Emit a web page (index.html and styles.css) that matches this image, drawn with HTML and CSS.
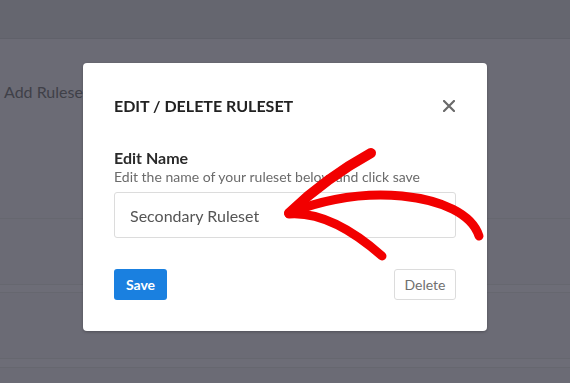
FILE: index.html
```html
<!DOCTYPE html>
<html lang="en">
<head>
    <meta charset="UTF-8">
    <meta name="viewport" content="width=device-width, initial-scale=1.0">
    <title>Edit / Delete Ruleset</title>
    <link rel="stylesheet" href="styles.css">
</head>
<body>
    <div class="topbar"></div>

    <div class="page">
        <div class="toolbar">Add Ruleset</div>
        <div class="row row-a"></div>
        <div class="row row-b"></div>
        <div class="row row-c"></div>
        <div class="row row-d"></div>
    </div>

    <div class="overlay">
        <div class="modal">
            <div class="modal-header">
                <h2>EDIT / DELETE RULESET</h2>
                <button class="btn-close" aria-label="Close">
                    <svg width="12" height="12" viewBox="0 0 12 12">
                        <path d="M1 1 L11 11 M11 1 L1 11" stroke="#6a6a6a" stroke-width="2.2" stroke-linecap="round"/>
                    </svg>
                </button>
            </div>

            <label class="field-label" for="ruleset-name">Edit Name</label>
            <p class="field-help">Edit the name of your ruleset below and click save</p>
            <input id="ruleset-name" class="field-input" type="text" value="Secondary Ruleset">

            <div class="modal-actions">
                <button class="btn-save">Save</button>
                <button class="btn-delete">Delete</button>
            </div>
        </div>
    </div>

    <!-- annotation arrow drawn over the screenshot -->
    <svg class="annotation" width="570" height="383" viewBox="0 0 570 383">
        <path d="M479 236 C472 214 442 200 402 196 C370 193 330 197 289 213" fill="none" stroke="#f20000" stroke-width="9" stroke-linecap="round"/>
        <path d="M289 213 C310 193 340 170 371 153" fill="none" stroke="#f20000" stroke-width="10" stroke-linecap="round"/>
        <path d="M289 214 C316 212 348 226 382 256" fill="none" stroke="#f20000" stroke-width="9" stroke-linecap="round"/>
    </svg>
</body>
</html>
```

FILE: styles.css
```css
* {
    box-sizing: border-box;
}
body {
    margin: 0;
    width: 570px;
    height: 383px;
    overflow: hidden;
    font-family: Lato, "Liberation Sans", sans-serif;
    background-color: #6b6b75;
}
.topbar {
    height: 39px;
    background-color: #65666f;
    border-bottom: 1px solid #60616a;
}
.toolbar {
    padding: 43px 0 0 4px;
    height: 180px;
    font-size: 16px;
    color: #3f4048;
    border-bottom: 1px solid #66676f;
}
.row-a {
    height: 66px;
    border-bottom: 1px solid #66676f;
}
.row-b {
    height: 8px;
    background-color: #6d6d77;
    border-bottom: 1px solid #66676f;
}
.row-c {
    height: 66px;
    border-bottom: 1px solid #66676f;
}
.row-d {
    height: 9px;
    background-color: #6d6d77;
    border-bottom: 1px solid #66676f;
}
.overlay {
    position: fixed;
    inset: 0;
    display: flex;
    justify-content: center;
    align-items: flex-start;
    padding-top: 63px;
}
.modal {
    width: 404px;
    height: 268px;
    background: white;
    border-radius: 4px;
    padding: 33px 31px 0 31px;
    box-shadow: 0 1px 3px rgba(0,0,0,0.25);
}
.modal-header {
    display: flex;
    justify-content: space-between;
    align-items: center;
    margin-bottom: 33px;
}
.modal-header h2 {
    margin: 0;
    font-size: 16px;
    font-weight: 700;
    color: #222;
}
.btn-close {
    border: none;
    background: none;
    padding: 0;
    margin-right: 1px;
    width: 12px;
    height: 12px;
    display: flex;
}
.field-label {
    display: block;
    font-size: 16px;
    font-weight: 700;
    color: #2a2a2a;
}
.field-help {
    margin: 1px 0 7px 0;
    font-size: 14px;
    color: #6b6b6b;
}
.field-input {
    display: block;
    width: 342px;
    height: 46px;
    padding: 0 15px;
    border: 1px solid #dcdcdc;
    border-radius: 3px;
    font-family: inherit;
    font-size: 16px;
    color: #555;
    outline: none;
}
.modal-actions {
    display: flex;
    justify-content: space-between;
    margin-top: 31px;
}
.btn-save {
    width: 53px;
    height: 31px;
    border: none;
    border-radius: 3px;
    background-color: #1a80e0;
    color: white;
    font-family: inherit;
    font-size: 14px;
    font-weight: 700;
}
.btn-delete {
    width: 62px;
    height: 31px;
    border: 1px solid #dcdcdc;
    border-radius: 3px;
    background: white;
    color: #707070;
    font-family: inherit;
    font-size: 14px;
}
.annotation {
    position: fixed;
    left: 0;
    top: 0;
    pointer-events: none;
}
```
